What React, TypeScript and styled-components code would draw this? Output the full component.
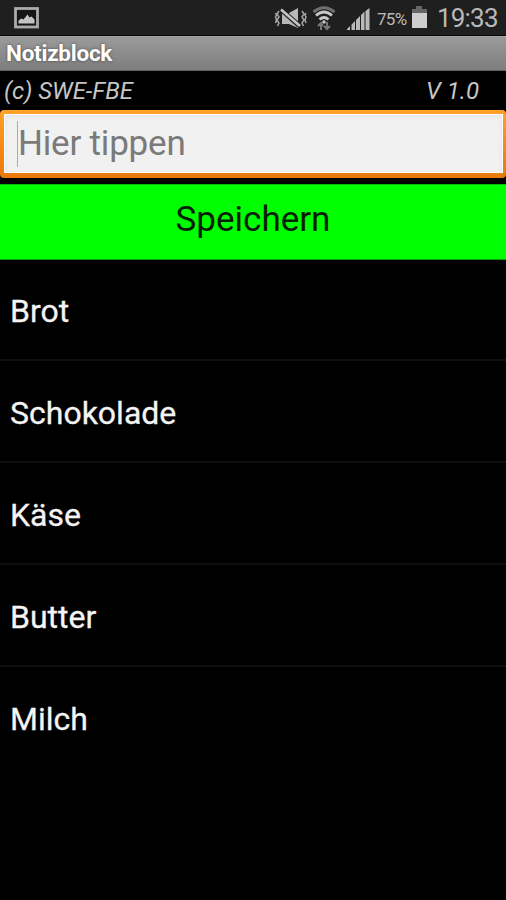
import React from "react";
import styled, { createGlobalStyle } from "styled-components";

const GlobalStyle = createGlobalStyle`
  html, body { margin: 0; background: #000; }
  * { box-sizing: border-box; }
`;

const Screen = styled.main`
  width: 506px;
  height: 900px;
  display: flex;
  flex-direction: column;
  overflow: hidden;
  background: #000;
  color: #f4f4f4;
  font-family: Roboto, sans-serif;
`;

const StatusBar = styled.header`
  height: 36px;
  flex: none;
  display: flex;
  align-items: flex-start;
  padding: 0 8px 0 14px;
  background: #1f1f1f;
  border-bottom: 1px solid #080808;
  color: #b9b9b9;
`;

const StatusIcon = styled.svg<{ $gap?: number; $top: number }>`
  flex: none;
  display: block;
  margin: ${(p) => p.$top}px 0 0 ${(p) => p.$gap ?? 0}px;
`;

const Spacer = styled.div`
  flex: 1;
`;

const Percent = styled.span`
  width: 30px;
  margin-left: 7px;
  font-size: 17px;
  line-height: 20px;
  padding-top: 9px;
  letter-spacing: -0.7px;
  white-space: nowrap;
`;

const Clock = styled.time`
  width: 61px;
  margin-left: 9px;
  font-size: 26px;
  line-height: 30px;
  padding-top: 3px;
  letter-spacing: -0.8px;
  white-space: nowrap;
`;

const TitleBar = styled.h1`
  height: 35px;
  flex: none;
  margin: 0;
  padding: 0 6px;
  border-top: 1px solid #a4a4a4;
  border-bottom: 1px solid #626262;
  background: linear-gradient(#9b9b9b, #7d7d7d);
  color: #fff;
  font-size: 22.5px;
  letter-spacing: -0.25px;
  line-height: 32px;
  font-weight: 700;
  text-shadow: 0 0 3px rgba(0, 0, 0, 0.5);
`;

const InfoRow = styled.div`
  height: 39px;
  flex: none;
  display: flex;
  justify-content: space-between;
  padding: 1px 27px 0 4px;
  color: #c6c6c6;
  font-size: 24px;
  line-height: 39px;
  font-style: italic;
`;

const FieldFrame = styled.div`
  height: 68px;
  flex: none;
  padding: 4px 3px 5px 4px;
  border-radius: 4px;
  background: linear-gradient(#ffa12b, #f88b16 50%, #e77a08);
`;

const Field = styled.div`
  height: 100%;
  display: flex;
  align-items: center;
  padding-left: 12px;
  background: #f1f1f1;
  border: 1px solid #fff;
  box-shadow: inset 0 2px 5px #e5e5ea;
`;

const Caret = styled.i`
  width: 1px;
  height: 46px;
  background: #aaa;
`;

const Placeholder = styled.span`
  color: #7a7a7a;
  font-size: 35px;
  letter-spacing: -0.2px;
  line-height: 42px;
`;

const SaveButton = styled.button`
  height: 76px;
  flex: none;
  margin: 6px 0 0;
  padding: 0 0 5px;
  border: 0;
  border-top: 1px solid #00b900;
  border-bottom: 1px solid #00a000;
  background: #00ff00;
  color: #062006;
  font-family: inherit;
  font-size: 35px;
  line-height: 69px;
`;

const NoteList = styled.ul`
  margin: -1px 0 0;
  padding: 0;
  list-style: none;
`;

const Note = styled.li`
  height: 102px;
  padding: 0 10px;
  border-bottom: 2px solid #101010;
  font-size: 32px;
  line-height: 104px;
  -webkit-text-stroke: 0.3px #f4f4f4;
  &:last-child { border-bottom: 0; }
`;

const notes = ["Brot", "Schokolade", "Käse", "Butter", "Milch"];

export default function App() {
  return (
    <Screen>
      <GlobalStyle />
      <StatusBar>
        <StatusIcon $top={7} width="25" height="22" viewBox="0 0 25 22">
          <rect x="1.5" y="1.5" width="22" height="18.5" fill="#161616" stroke="#aaa" strokeWidth="2.8" />
          <path d="M4.500 16.500v-3l3-2 2 1 4-5 2 3 2-1 3 3v4z" fill="#c4c4c4" />
        </StatusIcon>
        <Spacer />
        <StatusIcon $top={7} width="34" height="22" viewBox="0 0 34 22">
          <path d="M9 6h7l9-5v20l-9-4H9z" fill="#b7b7b7" />
          <path d="M8 2.500l18 16" stroke="#1f1f1f" strokeWidth="5" />
          <path d="M8 2.500l19 16.500" stroke="#c4c4c4" strokeWidth="2.7" />
          <path d="M6 4l-2 3 2 3-2 3 2 3-1.500 3M2.500 6l1 2-1 2 1 3-1 3M29 4l2 3-2 3 2 3-2 3 1.500 3M33 6l-1 2 1 2-1 3 1 3" fill="none" stroke="#a5a5a5" strokeWidth="1.5" />
        </StatusIcon>
        <StatusIcon $gap={5} $top={6} width="24" height="25" viewBox="0 0 24 25">
          <path d="M1.500 6Q12-2.500 22.500 6" fill="none" stroke="#707070" strokeWidth="3" />
          <path d="M4 9.500q8-7 16 0M7.500 13.500q4.500-4 9 0" fill="none" stroke="#c6c6c6" strokeWidth="2.8" />
          <circle cx="12" cy="16" r="1.8" fill="#c6c6c6" />
          <path d="M9 24v-7m-3 3 3-3 2 3M15 16v7m-3-3 3 3 3-3" fill="none" stroke="#777" strokeWidth="2" />
        </StatusIcon>
        <StatusIcon $gap={11} $top={8} width="23" height="23" viewBox="0 0 23 23">
          <path d="M0 22v-1l3-3v4zM4.500 22v-5.500l3.500-3.500v9zM9 22V12l4-4V22zM14 22V7l3.500-3.500V22zM18.500 22V3l4-3v22z" fill="#b9b9b9" />
        </StatusIcon>
        <Percent>75%</Percent>
        <StatusIcon $gap={4} $top={6} width="17" height="24" viewBox="0 0 17 24">
          <path d="M5 0h6v3h5v4H1V3h4z" fill="#666" />
          <path d="M1 7h15v15H1z" fill="#cecece" />
        </StatusIcon>
        <Clock>19:33</Clock>
      </StatusBar>
      <TitleBar>Notizblock</TitleBar>
      <InfoRow>
        <span>(c) SWE-FBE</span>
        <span>V 1.0</span>
      </InfoRow>
      <FieldFrame>
        <Field>
          <Caret />
          <Placeholder>Hier tippen</Placeholder>
        </Field>
      </FieldFrame>
      <SaveButton>Speichern</SaveButton>
      <NoteList>
        {notes.map((note) => (
          <Note key={note}>{note}</Note>
        ))}
      </NoteList>
    </Screen>
  );
}
